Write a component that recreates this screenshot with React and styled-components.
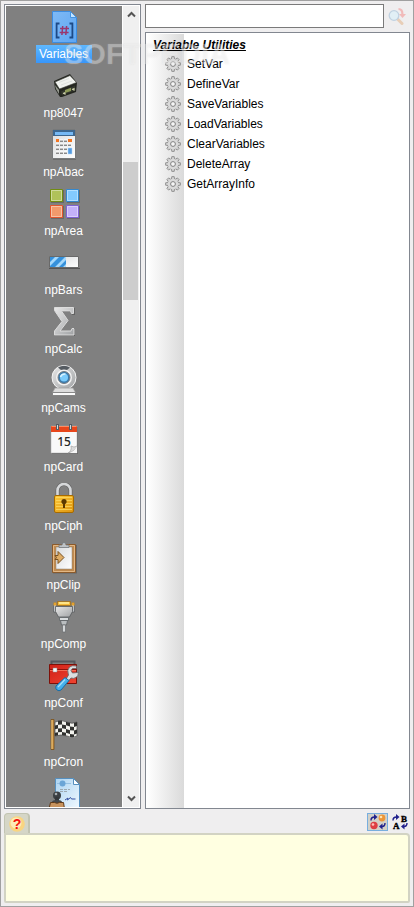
import React, { useState } from "react";
import styled, { createGlobalStyle } from "styled-components";

const GlobalStyle = createGlobalStyle`
	* {
		box-sizing: border-box;
	}
	body {
		margin: 0;
		font-family: "Liberation Sans", Arial, sans-serif;
		font-size: 12px;
		color: #000;
	}
	button,
	input {
		font: inherit;
		color: inherit;
	}
	ul {
		list-style: none;
		margin: 0;
		padding: 0;
	}
`;

const Window = styled.div`
	position: relative;
	display: flex;
	flex-direction: column;
	gap: 4px;
	height: 100vh;
	min-height: 300px;
	padding: 3px;
	border: 1px solid #a0a0a0;
	background: #efeeef;
`;

const Main = styled.main`
	display: grid;
	grid-template-columns: 137px minmax(0, 1fr);
	gap: 4px;
	flex: 1;
	min-height: 0;
`;

const Sidebar = styled.nav`
	display: flex;
	min-height: 0;
	padding: 1px;
	border: 1px solid #828790;
	background: #fff;
`;

const GroupList = styled.ul`
	display: flex;
	flex-direction: column;
	gap: 7px;
	flex: 1;
	padding: 5px 0 0;
	overflow: hidden;
	background: #808080;
`;

const GroupButton = styled.button`
	display: flex;
	flex-direction: column;
	align-items: center;
	gap: 2px;
	width: 100%;
	padding: 0;
	border: 0;
	background: none;
`;

const GroupLabel = styled.span`
	height: 18px;
	padding: 1px 4px 0 3px;
	line-height: 17px;
	color: #fff;
	background: ${(props) => (props.$active ? "linear-gradient(#5fb8ff, #3796fb)" : "none")};
`;

const GroupIcon = styled.svg`
	display: block;
	width: 32px;
	height: 32px;
`;

const Scrollbar = styled.div`
	display: flex;
	flex-direction: column;
	width: 17px;
	border-left: 1px solid #fff;
	background: #f0f0f0;
`;

const ScrollButton = styled.button`
	display: flex;
	align-items: center;
	justify-content: center;
	height: 17px;
	padding: 0;
	border: 0;
	background: #f0f0f0;
`;

const ScrollTrack = styled.div`
	display: grid;
	grid-template-rows: 139fr 138fr 490fr;
	flex: 1;
`;

const ScrollThumb = styled.div`
	grid-row: 2;
	width: 15px;
	background: #cdcdcd;
`;

const Content = styled.section`
	display: flex;
	flex-direction: column;
	gap: 4px;
	min-height: 0;
`;

const SearchRow = styled.form`
	display: flex;
	height: 24px;
`;

const SearchInput = styled.input`
	flex: 1;
	min-width: 0;
	padding: 0 4px;
	border: 1px solid #7a7a7a;
	border-radius: 0;
	background: #fff;
	outline: none;
`;

const SearchButton = styled.button`
	display: flex;
	align-items: center;
	justify-content: center;
	width: 26px;
	padding: 0;
	border: 0;
	background: none;
`;

const Commands = styled.div`
	flex: 1;
	min-height: 0;
	overflow: hidden;
	padding: 2px 1px 1px;
	border: 1px solid #828790;
	background: linear-gradient(to right, #fff, #dadada) no-repeat 1px 1px / 37px 100% #fff;
`;

const CommandsTitle = styled.h1`
	margin: 0;
	padding: 0 6px;
	font-size: 12px;
	line-height: 20px;
	font-style: italic;
	font-weight: bold;
	text-decoration: underline;
`;

const CommandButton = styled.button`
	display: flex;
	align-items: center;
	gap: 6px;
	width: 100%;
	height: 20px;
	padding: 0 0 2px 18px;
	border: 0;
	background: none;
	text-align: left;
`;

const Footer = styled.footer`
	display: flex;
	flex-direction: column;
`;

const FooterBar = styled.div`
	display: flex;
	justify-content: space-between;
	align-items: flex-start;
	height: 20px;
`;

const HelpTab = styled.button`
	display: flex;
	align-items: center;
	justify-content: center;
	width: 26px;
	height: 20px;
	padding: 0;
	border: 1px solid #c2c4b2;
	border-right-width: 2px;
	border-bottom: 0;
	border-radius: 4px 4px 0 0;
	background: #d5d6c7;
`;

const ToolGroup = styled.div`
	display: flex;
	gap: 1px;
`;

const ToolButton = styled.button`
	display: flex;
	align-items: center;
	justify-content: center;
	width: 21px;
	height: 18px;
	padding: 0;
	border: 1px solid ${(props) => (props.$pressed ? "#78aede" : "transparent")};
	background: ${(props) => (props.$pressed ? "#d3d1c8" : "none")};

	svg {
		overflow: visible;
	}
`;

const Description = styled.div`
	height: 70px;
	border: 2px solid #d2d3c3;
	border-radius: 0 4px 2px 2px;
	background: #ffffe1;
`;

const Watermark = styled.span`
	position: absolute;
	top: 37px;
	left: 63px;
	font-size: 29px;
	line-height: 32px;
	font-weight: bold;
	color: rgba(255, 255, 255, 0.28);
	text-shadow: 0 0 2px rgba(190, 190, 190, 0.25);
	pointer-events: none;
`;

const icons = {
	variables: (
		<>
			<path d="M4.5 .5h18l6 6v25h-24z" fill="url(#docBlue)" stroke="#3b8ce0" />
			<path d="M22.5 .5v6h6z" fill="#c4e4ff" stroke="#4594e2" />
			<path d="M11.5 12.5H8.6v14h2.9M21.5 12.5h2.9v14h-2.9" fill="none" stroke="#1d4a87" strokeWidth="1.8" />
			<path d="M14.7 15l-.8 9M18.6 15l-.8 9M12 17.5h9M11.6 21.5h9" fill="none" stroke="#99366e" strokeWidth="1.5" />
		</>
	),
	chip: (
		<>
			<path d="M6 11l1 8 5 8 2 0 14-5 1-9-7-9z" fill="#242620" />
			<path d="M7 12L22 5.5l6.500 7L11.500 19z" fill="#f1f3ef" stroke="#3a3c36" strokeWidth=".6" />
			<path d="M11 12.500l10-4M13 15l11-4" stroke="#dadddb" strokeWidth=".8" />
			<path d="M7 15l4 5v4l-3-5z" fill="#93978d" />
			<path d="M13 21.500l14-6v5l-13 5z" fill="#33372c" />
			<path d="M15 23.500l2-.8v2M24 19.500l2-.8v2" fill="none" stroke="#c9cba8" strokeWidth="1.200" />
			<path d="M17 20l6-2.300v3.300l-6 2z" fill="#8c9a58" />
		</>
	),
	abacus: (
		<>
			<path d="M5 1h23v30H5z" fill="#555" opacity=".45" />
			<path d="M4.5 .5h23v29h-23z" fill="url(#paper)" stroke="#77797a" />
			<path d="M5 1h22v6H5z" fill="#3d678f" />
			<path d="M7 3h18v3H7z" fill="#76b9f5" />
			<g fill="#888">
				{[8, 12, 16, 20].map((x) => [11, 15, 19, 23].map((y) => <path key={`${x}-${y}`} d={`M${x} ${y}h3v2h-3z`} />))}
			</g>
			<path d="M8 11h3M12 11h3M16 11h3M8 15h3M12 15h3M16 15h3M20 15h3M8 19h3M12 19h3M16 19h3M8 23h3M12 23h3M16 23h3" stroke="#fff" />
			<path d="M8 10h3v3H8zM20 10h4v3h-4z" fill="#f37521" />
			<path d="M20 19h4v6h-4z" fill="#549bdf" stroke="#b9ddff" strokeWidth=".5" />
		</>
	),
	area: (
		<>
			<path d="M3 2h13v13H3zM19 2h13v13H19zM3 18h13v13H3zM19 18h13v13H19z" fill="#444" opacity=".4" />
			<path d="M2.5 1.5h12v12h-12z" fill="#b0c25a" stroke="#718c12" />
			<path d="M18.5 1.5h12v12h-12z" fill="#83caff" stroke="#3488ce" />
			<path d="M2.5 17.5h12v12h-12z" fill="#f29a6c" stroke="#e2562e" />
			<path d="M18.5 17.5h12v12h-12z" fill="#c3b1f9" stroke="#7f62d4" />
			<path d="M3.5 2.5h10v10h-10zM19.5 2.5h10v10h-10zM3.5 18.5h10v10h-10zM19.5 18.5h10v10h-10z" fill="none" stroke="#fff" opacity=".4" />
		</>
	),
	bars: (
		<>
			<path d="M1 21.5h31" stroke="#555" />
			<path d="M1.5 9.5h29v11h-29z" fill="url(#paper)" stroke="#696969" />
			<path d="M2 10h16v10H2z" fill="#3591dc" />
			<path d="M2 15l5-5h4L2 19zM7 20l10-10h1v3l-7 7zM15 20l3-3v3z" fill="#a5d8fb" />
		</>
	),
	calc: (
		<>
			<path d="M7 2h20v7h-3l-1-3H14l6 9-8 10h11l1-3h3v8H7v-4l8-11-8-10z" fill="#4e4e4e" opacity=".6" />
			<path d="M6.5 1.5h19v6h-2l-1-2.500H13.500l6.500 9.500-8 10.500h11l1-2.500h2V29H6.500v-4L14 15.500 6.500 4.500z" fill="url(#metal)" stroke="#dcdcdc" />
		</>
	),
	cams: (
		<>
			<ellipse cx="16" cy="12.5" rx="12" ry="12" fill="url(#metal)" stroke="#f4f4f4" />
			<path d="M10 2.500Q16-1 22 2.500L19 5h-6z" fill="#555b61" />
			<circle cx="16" cy="12.5" r="8" fill="#f2f2f2" />
			<circle cx="16" cy="12.5" r="6" fill="#397baf" stroke="#777d82" />
			<circle cx="16" cy="12.5" r="4" fill="#7acbfb" />
			<path d="M12.5 12q1-3.500 5-3" stroke="#d7f3ff" strokeWidth="1.5" fill="none" />
			<path d="M7 23h18l2.500 4.500h-23z" fill="#ddd" stroke="#999" strokeWidth=".7" />
			<path d="M4.5 27.5h23v3h-23z" fill="#fafafa" stroke="#767676" strokeWidth=".8" />
		</>
	),
	card: (
		<>
			<path d="M4 3h26v27H4z" fill="#444" opacity=".4" />
			<path d="M3 2h26v27H3z" fill="#f9f9f9" stroke="#aaa" strokeWidth=".5" />
			<path d="M3 2h26v6H3z" fill="#e8471c" />
			<path d="M3.5 2.5h25" stroke="#ff8b61" />
			<path d="M8 0h3v6H8zM21 0h3v6h-3z" fill="#555d63" />
			<path d="M9 1h1v4H9zM22 1h1v4h-1z" fill="#d3dadd" />
			<text x="16" y="22" textAnchor="middle" fontFamily="Noto Sans" fontSize="12" fontWeight="500" fill="#282828">
				15
			</text>
			<path d="M20 29q4-2 3-7 3 2 6 0-1 5-9 7z" fill="#dadada" stroke="#9b9b9b" strokeWidth=".6" />
			<path d="M29 22v7h-7q5-2 7-7z" fill="#f6f6f6" />
		</>
	),
	lock: (
		<>
			<path d="M9.5 14V7.500a6.500 6.500 0 0 1 13 0V14" fill="none" stroke="#666" strokeWidth="4" />
			<path d="M9.5 14V7.500a6.500 6.500 0 0 1 13 0V14" fill="none" stroke="#d6d8da" strokeWidth="2.6" />
			<rect x="6.5" y="12.5" width="19" height="17" rx="1.5" fill="url(#gold)" stroke="#a76b00" />
			<path d="M8 14.5h16M8 17.5h16M8 20.5h16M8 23.5h16M8 26.5h16" stroke="#ffdf6b" opacity=".7" />
			<circle cx="16" cy="18.5" r="2.6" fill="#5d3900" />
			<path d="M15 19h2v6h-2z" fill="#5d3900" />
		</>
	),
	clip: (
		<>
			<path d="M5 3h24v28.500H5z" fill="#333" opacity=".35" />
			<path d="M4.5 2.5h23v28h-23z" fill="#c08a4f" stroke="#8a5a2c" />
			<path d="M5.5 3.5h21v26h-21z" fill="none" stroke="#e2b784" />
			<path d="M8 5h16v22H8z" fill="url(#paper)" stroke="#8d8272" strokeWidth=".5" />
			<path d="M11 5.500V3h3q0-2.500 2-2.500T18 3h3v2.500z" fill="#bfc3c6" stroke="#74797d" strokeWidth=".8" />
			<path d="M7 13.500h3v-4l6 6-6 6v-4H7l1.500-2z" fill="#dfac64" stroke="#78501f" />
		</>
	),
	comp: (
		<>
			<path d="M5.5 2h3v9h-3zM23.5 2h3v9h-3z" fill="#bfc2c5" stroke="#56595c" strokeWidth=".7" />
			<path d="M5.5 1.5h3v3h-3zM23.5 1.5h3v3h-3z" fill="#e5a22e" />
			<path d="M9.5 .5h13v4h-13z" fill="#f6bd3a" stroke="#9b6514" strokeWidth=".7" />
			<path d="M11 2h10" stroke="#fff2a5" strokeWidth="1.5" />
			<path d="M7.500 5.500h17v5l-3 5.500h-11l-3-5.500z" fill="url(#metal)" stroke="#56595c" strokeWidth=".8" />
			<path d="M11.5 16.5h9v3h-9z" fill="#d9dcde" stroke="#5c6063" strokeWidth=".8" />
			<path d="M12.5 19.5h7L18.500 24h-5z" fill="#b9bdbf" stroke="#5c6063" strokeWidth=".8" />
			<path d="M14.5 24h3v7h-3z" fill="#d4d7d9" stroke="#686c6f" strokeWidth=".7" />
		</>
	),
	conf: (
		<>
			<path d="M3.5 5V1.5h23V5" fill="none" stroke="#55595e" strokeWidth="2" />
			<path d="M1.5 4.5h27v19h-27z" fill="url(#red)" stroke="#7d1109" />
			<path d="M2 9.5h26" stroke="#8d120b" />
			<path d="M2 10.5h26" stroke="#f36c54" />
			<path d="M5 8h4v4H5z" fill="#f8f8f8" stroke="#8e8e8e" strokeWidth=".5" />
			<path d="M15 24L20.500 15q-2-5 1-8 2.500-2 7-1v2.500h-4l-1.500 2 1.500 2.500 5-.5 1-.5q0 4-2.500 5.500-2.500 1.500-5 .5l-5 6z" fill="#dbdee0" stroke="#5c6165" strokeWidth=".8" />
			<path d="M17 17.500l4 3L13 30q-2 1.500-4 0t-1-4z" fill="#45b0ec" stroke="#196ca4" />
			<path d="M17 19.500L10 27" stroke="#a6def9" strokeWidth="1.3" />
		</>
	),
	flag: (
		<>
			<path d="M3 .5h3v30H3z" fill="#c58d41" stroke="#79501c" strokeWidth=".8" />
			<path d="M4 1v29" stroke="#efc97f" />
			<path d="M7 3q6-3 12 0 5 2.500 10 0v14q-5 3-10 0-6-2-12 0z" fill="#f2f2ed" stroke="#494949" strokeWidth=".7" />
			<path d="M10 1.800l4-.4v4l-4 .3zM18 2.700l4 1.300v3.500l-4-1.200zM26 4l3-1v4l-3 1zM7 6.500l3-.8v3.800l-3 .8zM14 5.400l4 .9v3.800l-4-.8zM22 7.500l4 .5v3.500l-4-.3zM10 9.500l4-.2v3.800l-4 .2zM18 10.100l4 1.100V15l-4-1.200zM26 11.500l3-1v4l-3 1zM7 13.800l3-.5v3l-3 .7zM14 13.100l4 .7v3l-4-.8zM22 15l4 .5v2.600l-4-.1z" fill="#30312f" />
		</>
	),
	stamp: (
		<>
			<path d="M7.5 .5h18l6 6v25h-24z" fill="url(#sheet)" stroke="#568fbe" />
			<path d="M25.5 .5v6h6z" fill="#fff" stroke="#568fbe" />
			<path d="M9 5.500h14" stroke="#8bb9dd" strokeWidth=".8" />
			<circle cx="14.5" cy="5.5" r="3" fill="#6ba5d6" />
			<path d="M12 11.5h10M12 13.5h8" stroke="#9da9b1" strokeDasharray="3 1" />
			<path d="M17 22l3-2-.5 2 3-2.500 1 1.500h4" stroke="#3350a2" fill="none" />
			<circle cx="9" cy="17.5" r="4" fill="#3b3f43" />
			<path d="M7.5 19h3l1 5h-5z" fill="#34373a" />
			<ellipse cx="9" cy="24" rx="5" ry="2" fill="#44484c" />
			<path d="M2.5 24.5h4q2.500 1.500 5 0h4l1 6.500H1z" fill="#c7935e" stroke="#613b18" />
			<circle cx="8" cy="16" r="1.3" fill="#a6abaf" />
		</>
	),
};

const groups = [
	{ name: "Variables", icon: "variables" },
	{ name: "np8047", icon: "chip" },
	{ name: "npAbac", icon: "abacus" },
	{ name: "npArea", icon: "area" },
	{ name: "npBars", icon: "bars" },
	{ name: "npCalc", icon: "calc" },
	{ name: "npCams", icon: "cams" },
	{ name: "npCard", icon: "card" },
	{ name: "npCiph", icon: "lock" },
	{ name: "npClip", icon: "clip" },
	{ name: "npComp", icon: "comp" },
	{ name: "npConf", icon: "conf" },
	{ name: "npCron", icon: "flag" },
	{ name: "", icon: "stamp" },
];

const commands = ["SetVar", "DefineVar", "SaveVariables", "LoadVariables", "ClearVariables", "DeleteArray", "GetArrayInfo"];

function Gradient({ id, from, to }) {
	return (
		<linearGradient id={id} x1="0" y1="0" x2="1" y2="1">
			<stop offset="0" stopColor={from} />
			<stop offset="1" stopColor={to} />
		</linearGradient>
	);
}

const HiddenDefs = styled.svg`
	position: absolute;
	width: 0;
	height: 0;
`;

function Gradients() {
	return (
		<HiddenDefs aria-hidden="true">
			<defs>
				<Gradient id="docBlue" from="#7fbaf5" to="#5ea6f3" />
				<Gradient id="paper" from="#d9dbdd" to="#ffffff" />
				<Gradient id="metal" from="#e8e8e8" to="#a0a2a4" />
				<Gradient id="gold" from="#ffc938" to="#dc9410" />
				<Gradient id="red" from="#cf2017" to="#f04431" />
				<Gradient id="sheet" from="#abd3f1" to="#f1f9ff" />
			</defs>
		</HiddenDefs>
	);
}

function GearIcon() {
	return (
		<svg width="16" height="16" viewBox="0 0 16 16" aria-hidden="true">
			<g fill="#d0d0d0" stroke="#858585" strokeWidth=".8">
				{[0, 45, 90, 135, 180, 225, 270, 315].map((angle) => (
					<path key={angle} d="M6.300 3.500L6.800 .6h2.400l.5 2.900" transform={`rotate(${angle} 8 8)`} />
				))}
			</g>
			<circle cx="8" cy="8" r="5.2" fill="#dadada" />
			<circle cx="8" cy="8" r="2.4" fill="#f6f6f6" stroke="#808080" strokeWidth="1" />
		</svg>
	);
}

function Chevron({ up }) {
	return (
		<svg width="9" height="7" viewBox="0 0 9 7" aria-hidden="true">
			<path d={up ? "M1 5.500l3.500-3.500L8 5.500" : "M1 1.500L4.500 5 8 1.500"} fill="none" stroke="#555" strokeWidth="2" />
		</svg>
	);
}

function FindIcon() {
	return (
		<svg width="18" height="18" viewBox="0 0 18 18" opacity=".55" aria-hidden="true">
			<path d="M9.5 12l4.500 4.500" stroke="#e3b48b" strokeWidth="3" strokeLinecap="round" />
			<circle cx="6" cy="8.5" r="4.8" fill="#d6f0fb" stroke="#9abbd6" strokeWidth="1.3" />
			<path d="M10.5 1q5 0 5 6H18l-3.500 4-3.500-4h2.300q0-4-2.800-4z" fill="#f4908e" />
		</svg>
	);
}

function CurvedArrows() {
	return (
		<g>
			<path d="M1 6.500Q1 3 4.500 3" fill="none" stroke="#20208c" strokeWidth="1.4" />
			<path d="M4 0l3.500 3L4 6z" fill="#20208c" />
			<path d="M15 9q0 3.500-3 3.500" fill="none" stroke="#20208c" strokeWidth="1.4" />
			<path d="M12.500 9.500l-3.500 3 3.500 3z" fill="#20208c" />
		</g>
	);
}

function SortByIcon() {
	return (
		<svg width="16" height="16" viewBox="0 0 16 16" aria-hidden="true">
			<CurvedArrows />
			<circle cx="12" cy="4" r="3.4" fill="#ec9538" />
			<circle cx="11" cy="3" r="1.3" fill="#ffe3b1" />
			<circle cx="4" cy="11.5" r="3.7" fill="#de3f43" />
			<circle cx="3" cy="10.5" r="1.3" fill="#ffc0ba" />
		</svg>
	);
}

function SortByNameIcon() {
	return (
		<svg width="16" height="16" viewBox="0 0 16 16" fontFamily="Liberation Serif" fontSize="9" fontWeight="bold" aria-hidden="true">
			<CurvedArrows />
			<text x="9" y="8" stroke="#000" strokeWidth=".4">
				B
			</text>
			<text x="1" y="15" stroke="#000" strokeWidth=".4">
				A
			</text>
		</svg>
	);
}

function HelpIcon() {
	return (
		<svg width="16" height="16" viewBox="0 0 16 16" aria-hidden="true">
			<circle cx="8" cy="8" r="7.8" fill="#f9d581" />
			<circle cx="7" cy="7" r="5.5" fill="#fdebb8" />
			<text x="8" y="13" textAnchor="middle" fontFamily="Liberation Sans" fontSize="14" fontWeight="bold" fill="#f5130c">
				?
			</text>
		</svg>
	);
}

export default function App() {
	const [selected, setSelected] = useState("Variables");
	const [query, setQuery] = useState("");
	const [byName, setByName] = useState(false);

	return (
		<>
			<GlobalStyle />
			<Gradients />
			<Window>
				<Main>
					<Sidebar aria-label="Libraries">
						<GroupList>
							{groups.map((group) => (
								<li key={group.icon}>
									<GroupButton type="button" aria-label={group.name || "More"} onClick={() => setSelected(group.name)}>
										<GroupIcon viewBox="0 0 32 32" aria-hidden="true">
											{icons[group.icon]}
										</GroupIcon>
										<GroupLabel $active={group.name === selected}>{group.name}</GroupLabel>
									</GroupButton>
								</li>
							))}
						</GroupList>
						<Scrollbar>
							<ScrollButton type="button" aria-label="Scroll up">
								<Chevron up />
							</ScrollButton>
							<ScrollTrack>
								<ScrollThumb />
							</ScrollTrack>
							<ScrollButton type="button" aria-label="Scroll down">
								<Chevron />
							</ScrollButton>
						</Scrollbar>
					</Sidebar>
					<Content>
						<SearchRow onSubmit={(e) => e.preventDefault()}>
							<SearchInput type="text" aria-label="Search" value={query} onChange={(e) => setQuery(e.target.value)} />
							<SearchButton type="submit" aria-label="Find next" disabled={!query}>
								<FindIcon />
							</SearchButton>
						</SearchRow>
						<Commands>
							<CommandsTitle>Variable Utilities</CommandsTitle>
							<ul>
								{commands.map((command) => (
									<li key={command}>
										<CommandButton type="button">
											<GearIcon />
											{command}
										</CommandButton>
									</li>
								))}
							</ul>
						</Commands>
					</Content>
				</Main>
				<Footer>
					<FooterBar>
						<HelpTab type="button" aria-label="Help">
							<HelpIcon />
						</HelpTab>
						<ToolGroup>
							<ToolButton type="button" aria-label="Group by type" $pressed={!byName} onClick={() => setByName(false)}>
								<SortByIcon />
							</ToolButton>
							<ToolButton type="button" aria-label="Sort by name" $pressed={byName} onClick={() => setByName(true)}>
								<SortByNameIcon />
							</ToolButton>
						</ToolGroup>
					</FooterBar>
					<Description />
				</Footer>
				<Watermark>SOFTPEDIA</Watermark>
			</Window>
		</>
	);
}
